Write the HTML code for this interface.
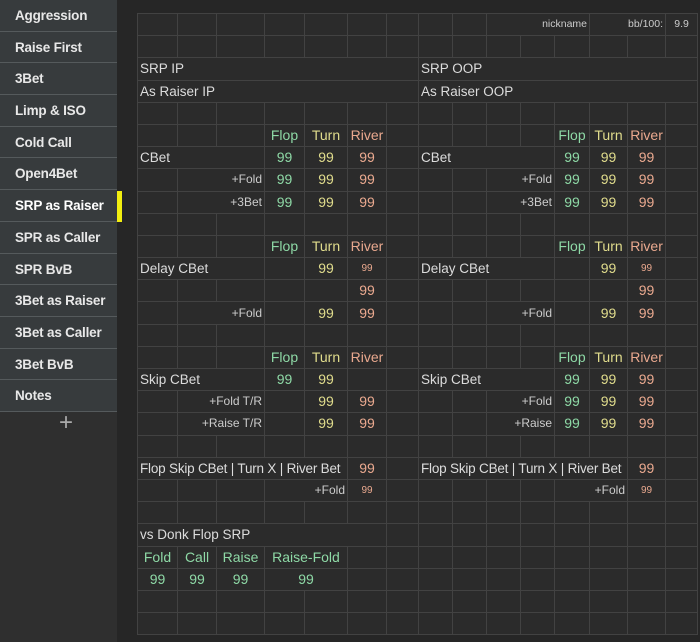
<!DOCTYPE html>
<html><head><meta charset="utf-8"><style>
*{margin:0;padding:0;box-sizing:border-box}
body{width:700px;height:642px;background:#262626;font-family:"Liberation Sans",sans-serif;position:relative;overflow:hidden}
.side{position:absolute;left:0;top:0;width:117px;height:642px;background:#2f2f2f}
.it{height:31.7px;background:#373b3d;border-bottom:1px solid #555a5c;color:#e8e8e8;font-weight:bold;font-size:13.5px;line-height:31px;padding-left:15px;letter-spacing:-0.2px}
.plus{color:#aaa;font-size:24px;text-align:center;line-height:22px;margin-left:15px;width:102px}
.bar{position:absolute;left:117px;top:191px;width:5px;height:31px;background:#f2ee10}
table{position:absolute;left:137px;top:13px;border-collapse:collapse;table-layout:fixed;width:560px}
td{border:1px solid #424242;background:#2b2b2b;height:22.2px;color:#dcdcdc;font-size:13.5px;padding:0 2px;white-space:nowrap;overflow:hidden;line-height:21px}
.r{text-align:right;font-size:12px;color:#ccc}
.g{color:#8ed9a6;text-align:center;font-size:14px}
.y{color:#e0dc8c;text-align:center;font-size:14px}
.s{color:#eaa98f;text-align:center;font-size:14px}
.sm{font-size:10px}
.h{font-size:10.5px;text-align:right;color:#ccc}
.t{letter-spacing:-0.2px}
</style></head><body>
<div class="side">
<div class="it">Aggression</div><div class="it">Raise First</div><div class="it">3Bet</div><div class="it">Limp &amp; ISO</div><div class="it">Cold Call</div><div class="it">Open4Bet</div><div class="it" style="color:#fff">SRP as Raiser</div><div class="it">SPR as Caller</div><div class="it">SPR BvB</div><div class="it">3Bet as Raiser</div><div class="it">3Bet as Caller</div><div class="it">3Bet BvB</div><div class="it">Notes</div>
<div class="plus">+</div>
</div>
<div class="bar"></div>
<table>
<colgroup><col style="width:40px"><col style="width:39px"><col style="width:48px"><col style="width:40px"><col style="width:43px"><col style="width:39px"><col style="width:32px"><col style="width:34px"><col style="width:34px"><col style="width:34px"><col style="width:34px"><col style="width:35px"><col style="width:38px"><col style="width:38px"><col style="width:32px"></colgroup>
<tr><td></td><td></td><td></td><td></td><td></td><td></td><td></td><td></td><td></td><td colspan="3" class="h">nickname</td><td colspan="2" class="h">bb/100:</td><td class="h" style="text-align:center">9.9</td></tr>
<tr><td></td><td></td><td></td><td></td><td></td><td></td><td></td><td></td><td></td><td></td><td></td><td></td><td></td><td></td><td></td></tr>
<tr><td colspan="7">SRP IP</td><td colspan="8">SRP OOP</td></tr>
<tr><td colspan="7">As Raiser IP</td><td colspan="8">As Raiser OOP</td></tr>
<tr><td></td><td></td><td></td><td></td><td></td><td></td><td></td><td></td><td></td><td></td><td></td><td></td><td></td><td></td><td></td></tr>
<tr><td></td><td></td><td></td><td class="g">Flop</td><td class="y">Turn</td><td class="s">River</td><td></td><td></td><td></td><td></td><td></td><td class="g">Flop</td><td class="y">Turn</td><td class="s">River</td><td></td></tr>
<tr><td colspan="3">CBet</td><td class="g">99</td><td class="y">99</td><td class="s">99</td><td></td><td colspan="4">CBet</td><td class="g">99</td><td class="y">99</td><td class="s">99</td><td></td></tr>
<tr><td></td><td colspan="2" class="r">+Fold</td><td class="g">99</td><td class="y">99</td><td class="s">99</td><td></td><td></td><td></td><td colspan="2" class="r">+Fold</td><td class="g">99</td><td class="y">99</td><td class="s">99</td><td></td></tr>
<tr><td></td><td colspan="2" class="r">+3Bet</td><td class="g">99</td><td class="y">99</td><td class="s">99</td><td></td><td></td><td></td><td colspan="2" class="r">+3Bet</td><td class="g">99</td><td class="y">99</td><td class="s">99</td><td></td></tr>
<tr><td></td><td></td><td></td><td></td><td></td><td></td><td></td><td></td><td></td><td></td><td></td><td></td><td></td><td></td><td></td></tr>
<tr><td></td><td></td><td></td><td class="g">Flop</td><td class="y">Turn</td><td class="s">River</td><td></td><td></td><td></td><td></td><td></td><td class="g">Flop</td><td class="y">Turn</td><td class="s">River</td><td></td></tr>
<tr><td colspan="3">Delay CBet</td><td></td><td class="y">99</td><td class="s sm">99</td><td></td><td colspan="4">Delay CBet</td><td></td><td class="y">99</td><td class="s sm">99</td><td></td></tr>
<tr><td></td><td></td><td></td><td></td><td></td><td class="s">99</td><td></td><td></td><td></td><td></td><td></td><td></td><td></td><td class="s">99</td><td></td></tr>
<tr><td></td><td colspan="2" class="r">+Fold</td><td></td><td class="y">99</td><td class="s">99</td><td></td><td></td><td></td><td colspan="2" class="r">+Fold</td><td></td><td class="y">99</td><td class="s">99</td><td></td></tr>
<tr><td></td><td></td><td></td><td></td><td></td><td></td><td></td><td></td><td></td><td></td><td></td><td></td><td></td><td></td><td></td></tr>
<tr><td></td><td></td><td></td><td class="g">Flop</td><td class="y">Turn</td><td class="s">River</td><td></td><td></td><td></td><td></td><td></td><td class="g">Flop</td><td class="y">Turn</td><td class="s">River</td><td></td></tr>
<tr><td colspan="3">Skip CBet</td><td class="g">99</td><td class="y">99</td><td></td><td></td><td colspan="4">Skip CBet</td><td class="g">99</td><td class="y">99</td><td class="s">99</td><td></td></tr>
<tr><td></td><td colspan="2" class="r">+Fold T/R</td><td></td><td class="y">99</td><td class="s">99</td><td></td><td></td><td></td><td colspan="2" class="r">+Fold</td><td class="g">99</td><td class="y">99</td><td class="s">99</td><td></td></tr>
<tr><td></td><td colspan="2" class="r">+Raise T/R</td><td></td><td class="y">99</td><td class="s">99</td><td></td><td></td><td></td><td colspan="2" class="r">+Raise</td><td class="g">99</td><td class="y">99</td><td class="s">99</td><td></td></tr>
<tr><td></td><td></td><td></td><td></td><td></td><td></td><td></td><td></td><td></td><td></td><td></td><td></td><td></td><td></td><td></td></tr>
<tr><td colspan="5" class="t">Flop Skip CBet | Turn X | River Bet</td><td class="s">99</td><td></td><td colspan="6" class="t">Flop Skip CBet | Turn X | River Bet</td><td class="s">99</td><td></td></tr>
<tr><td></td><td></td><td></td><td colspan="2" class="r">+Fold</td><td class="s sm">99</td><td></td><td></td><td></td><td></td><td></td><td colspan="2" class="r">+Fold</td><td class="s sm">99</td><td></td></tr>
<tr><td></td><td></td><td></td><td></td><td></td><td></td><td></td><td></td><td></td><td></td><td></td><td></td><td></td><td></td><td></td></tr>
<tr><td colspan="6">vs Donk Flop SRP</td><td></td><td></td><td></td><td></td><td></td><td></td><td></td><td></td><td></td></tr>
<tr><td class="g">Fold</td><td class="g">Call</td><td class="g">Raise</td><td colspan="2" class="g">Raise-Fold</td><td></td><td></td><td></td><td></td><td></td><td></td><td></td><td></td><td></td><td></td></tr>
<tr><td class="g">99</td><td class="g">99</td><td class="g">99</td><td colspan="2" class="g">99</td><td></td><td></td><td></td><td></td><td></td><td></td><td></td><td></td><td></td><td></td></tr>
<tr><td></td><td></td><td></td><td></td><td></td><td></td><td></td><td></td><td></td><td></td><td></td><td></td><td></td><td></td><td></td></tr>
<tr><td></td><td></td><td></td><td></td><td></td><td></td><td></td><td></td><td></td><td></td><td></td><td></td><td></td><td></td><td></td></tr>
</table>
</body></html>
